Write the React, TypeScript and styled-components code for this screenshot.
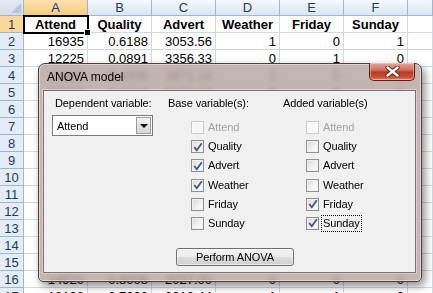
import { Fragment } from 'react';
import styled, { createGlobalStyle } from 'styled-components';

const GlobalStyle = createGlobalStyle`
    body {
        margin: 0;
        overflow: hidden;
        background: #fff;
    }
`;

const columns = ['A', 'B', 'C', 'D', 'E', 'F'];

const data: string[][] = [
    ['Attend', 'Quality', 'Advert', 'Weather', 'Friday', 'Sunday'],
    ['16935', '0.6188', '3053.56', '1', '0', '1'],
    ['12225', '0.0891', '3356.33', '0', '1', '0'],
    ['15862', '0.4305', '2871.14', '1', '0', '0'],
    ['13307', '0.2214', '3102.87', '0', '0', '1'],
    ['17244', '0.7652', '2954.02', '1', '1', '0'],
    ['11896', '0.1437', '3311.75', '0', '0', '0'],
    ['14520', '0.5519', '2765.48', '1', '0', '1'],
    ['16011', '0.6943', '3189.90', '1', '1', '0'],
    ['12874', '0.3026', '2902.66', '0', '0', '0'],
    ['15433', '0.4877', '3244.12', '1', '0', '1'],
    ['13998', '0.2760', '2811.39', '0', '1', '0'],
    ['17605', '0.8121', '3067.81', '1', '0', '0'],
    ['12450', '0.1189', '2988.25', '0', '0', '1'],
    ['16320', '0.5804', '3150.07', '1', '1', '0'],
    ['14920', '0.8008', '2027.00', '0', '0', '0'],
    ['18198', '0.7303', '3013.44', '1', '1', '0'],
];

const Page = styled.div`
    position: relative;
    width: 433px;
    height: 293px;
    overflow: hidden;
`;

const Sheet = styled.div`
    display: grid;
    grid-template-columns: 24px repeat(6, 64px) 25px;
    grid-template-rows: 16px;
    grid-auto-rows: 17px;
    font-family: "Liberation Sans", Arial, sans-serif;
`;

const Corner = styled.div`
    position: relative;
    box-sizing: border-box;
    background: linear-gradient(#e4ebf5, #d3ddeb);
    border-right: 1px solid #9eb6ce;
    border-bottom: 1px solid #9eb6ce;

    &::after {
        content: '';
        position: absolute;
        right: 2px;
        bottom: 2px;
        border-left: 10px solid transparent;
        border-bottom: 10px solid #b4c6dc;
    }
`;

const ColHeader = styled.div<{ $selected?: boolean }>`
    box-sizing: border-box;
    display: flex;
    align-items: center;
    justify-content: center;
    font-size: 13px;
    color: #1f3a5c;
    background: ${p => p.$selected
        ? 'linear-gradient(#fbe0ae, #f7cd7f)'
        : 'linear-gradient(#f5f8fc, #dce5f1)'};
    border-right: 1px solid #9eb6ce;
    border-bottom: 1px solid ${p => (p.$selected ? '#f2b254' : '#9eb6ce')};
`;

const RowHeader = styled.div<{ $selected?: boolean }>`
    box-sizing: border-box;
    display: flex;
    align-items: center;
    justify-content: center;
    font-size: 13px;
    color: #1f3a5c;
    background: ${p => (p.$selected ? '#f9d898' : '#e4ecf7')};
    border-right: 1px solid ${p => (p.$selected ? '#f2b254' : '#9eb6ce')};
    border-bottom: 1px solid #9eb6ce;
`;

const Cell = styled.div<{ $bold?: boolean; $active?: boolean }>`
    position: relative;
    box-sizing: border-box;
    display: flex;
    align-items: center;
    justify-content: ${p => (p.$bold ? 'center' : 'flex-end')};
    padding: 0 3px;
    font-size: 13px;
    font-weight: ${p => (p.$bold ? 700 : 400)};
    color: #000;
    white-space: nowrap;
    border-right: 1px solid #d0d7e5;
    border-bottom: 1px solid #d0d7e5;
    outline: ${p => (p.$active ? '2px solid #000' : 'none')};
    outline-offset: -1px;
`;

const FillHandle = styled.span`
    position: absolute;
    right: -4px;
    bottom: -4px;
    width: 5px;
    height: 5px;
    background: #000;
    border: 1px solid #fff;
    z-index: 1;
`;

const Dialog = styled.div`
    position: absolute;
    left: 38px;
    top: 63px;
    width: 384px;
    height: 219px;
    box-sizing: border-box;
    display: flex;
    flex-direction: column;
    border: 1px solid #4e3f3c;
    border-radius: 7px 7px 5px 5px;
    background: rgba(184, 165, 160, 0.82);
    backdrop-filter: blur(2.5px);
    box-shadow: inset 0 0 0 1px rgba(255, 255, 255, 0.45), 3px 4px 9px rgba(0, 0, 0, 0.45);
    font-family: "Liberation Sans", Tahoma, sans-serif;
`;

const TitleBar = styled.div`
    position: relative;
    height: 26px;
    flex: none;
    display: flex;
    align-items: center;
    padding-left: 8px;
    font-size: 12px;
    color: #000;
`;

const CloseButton = styled.div`
    position: absolute;
    top: -1px;
    right: 6px;
    width: 46px;
    height: 18px;
    box-sizing: border-box;
    display: flex;
    align-items: center;
    justify-content: center;
    border: 1px solid #5a2118;
    border-top: none;
    border-radius: 0 0 5px 5px;
    background: linear-gradient(#e6a79a 0%, #d2705d 40%, #b83a24 55%, #c9553c 85%, #e08a6c 100%);
    box-shadow: inset 0 0 0 1px rgba(255, 220, 210, 0.45);
`;

const Panel = styled.div`
    flex: 1;
    margin: 0 5px 8px 4px;
    border: 1px solid #7b7371;
    background: #f0f0f0;
    box-shadow: 0 0 0 1px rgba(255, 255, 255, 0.35);
    font-size: 11px;
    letter-spacing: -0.1px;
    color: #000;
`;

const Columns = styled.div`
    display: grid;
    grid-template-columns: 116px 115px 1fr;
    padding: 6px 0 0 8px;
`;

const Group = styled.div`
    display: flex;
    flex-direction: column;
`;

const Heading = styled.div<{ $indent?: number }>`
    line-height: 13px;
    height: 13px;
    padding-left: ${p => p.$indent ?? 0}px;
    white-space: nowrap;
`;

const Combo = styled.div`
    margin-top: 5px;
    width: 101px;
    height: 21px;
    box-sizing: border-box;
    display: flex;
    border: 1px solid #7a7a7a;
    background: #fff;
`;

const ComboText = styled.div`
    flex: 1;
    display: flex;
    align-items: center;
    padding-left: 4px;
`;

const ComboArrow = styled.div`
    width: 15px;
    margin: 1px;
    box-sizing: border-box;
    display: flex;
    align-items: center;
    justify-content: center;
    border: 1px solid #9c9c9c;
    background: linear-gradient(#f3f3f3, #d6d6d6);

    &::after {
        content: '';
        border-left: 4px solid transparent;
        border-right: 4px solid transparent;
        border-top: 4px solid #000;
    }
`;

const CheckList = styled.div`
    display: flex;
    flex-direction: column;
    gap: 6.2px;
    margin-top: 11px;
    padding-left: 23px;
`;

const Item = styled.div<{ $disabled?: boolean }>`
    display: flex;
    align-items: center;
    gap: 4px;
    height: 13px;
    color: ${p => (p.$disabled ? '#a3a3a3' : '#000')};
`;

const Box = styled.div<{ $disabled?: boolean }>`
    width: 13px;
    height: 13px;
    box-sizing: border-box;
    flex: none;
    display: flex;
    align-items: center;
    justify-content: center;
    border: 1px solid ${p => (p.$disabled ? '#c9c9c9' : '#8e8f8f')};
    background: ${p => p.$disabled
        ? '#f6f6f6'
        : 'linear-gradient(135deg, #d6d6d6, #f4f4f4 60%, #fdfdfd)'};
    box-shadow: inset 0 0 0 1px ${p => (p.$disabled ? '#fbfbfb' : '#f0f0f0')};
`;

const ItemLabel = styled.span<{ $focused?: boolean }>`
    line-height: 13px;
    padding: 1px 1px;
    margin-left: -1px;
    outline: ${p => (p.$focused ? '1px dotted #000' : 'none')};
`;

const ButtonRow = styled.div`
    padding: 18px 0 0 132px;
`;

const Button = styled.div`
    width: 118px;
    height: 18px;
    box-sizing: border-box;
    display: flex;
    align-items: center;
    justify-content: center;
    border: 1px solid #707070;
    border-radius: 3px;
    background: linear-gradient(#f2f2f2 0%, #ebebeb 50%, #dddddd 51%, #cfcfcf 100%);
    box-shadow: inset 0 0 0 1px rgba(255, 255, 255, 0.6);
`;

const Check = () => (
    <svg width="10" height="10" viewBox="0 0 10 10">
        <path d="M1.3 5 L3.8 8.3 L8.8 1.2" fill="none" stroke="#3f5396" strokeWidth="1.8" />
    </svg>
);

const CloseGlyph = () => (
    <svg width="15" height="11" viewBox="0 0 15 11">
        <path d="M2.5 1.5 L12.5 9.5 M12.5 1.5 L2.5 9.5" stroke="#4a2a24" strokeWidth="4.2" strokeLinecap="round" />
        <path d="M2.5 1.5 L12.5 9.5 M12.5 1.5 L2.5 9.5" stroke="#fff" strokeWidth="2.4" strokeLinecap="round" />
    </svg>
);

type Var = { name: string; checked?: boolean; disabled?: boolean; focused?: boolean };

const baseVars: Var[] = [
    { name: 'Attend', disabled: true },
    { name: 'Quality', checked: true },
    { name: 'Advert', checked: true },
    { name: 'Weather', checked: true },
    { name: 'Friday' },
    { name: 'Sunday' },
];

const addedVars: Var[] = [
    { name: 'Attend', disabled: true },
    { name: 'Quality' },
    { name: 'Advert' },
    { name: 'Weather' },
    { name: 'Friday', checked: true },
    { name: 'Sunday', checked: true, focused: true },
];

const VarList = ({ vars }: { vars: Var[] }) => (
    <CheckList>
        {vars.map(v => (
            <Item key={v.name} $disabled={v.disabled}>
                <Box $disabled={v.disabled}>{v.checked && <Check />}</Box>
                <ItemLabel $focused={v.focused}>{v.name}</ItemLabel>
            </Item>
        ))}
    </CheckList>
);

const App = () => {
    return (
        <Page>
            <GlobalStyle />
            <Sheet>
                <Corner />
                {columns.map(c => (
                    <ColHeader key={c} $selected={c === 'A'}>{c}</ColHeader>
                ))}
                <ColHeader />
                {data.map((row, r) => (
                    <Fragment key={r}>
                        <RowHeader $selected={r === 0}>{r + 1}</RowHeader>
                        {row.map((v, c) => (
                            <Cell key={c} $bold={r === 0} $active={r === 0 && c === 0}>
                                {v}
                                {r === 0 && c === 0 && <FillHandle />}
                            </Cell>
                        ))}
                        <Cell />
                    </Fragment>
                ))}
            </Sheet>

            <Dialog>
                <TitleBar>
                    ANOVA model
                    <CloseButton><CloseGlyph /></CloseButton>
                </TitleBar>
                <Panel>
                    <Columns>
                        <Group>
                            <Heading $indent={3}>Dependent variable:</Heading>
                            <Combo>
                                <ComboText>Attend</ComboText>
                                <ComboArrow />
                            </Combo>
                        </Group>
                        <Group>
                            <Heading>Base variable(s):</Heading>
                            <VarList vars={baseVars} />
                        </Group>
                        <Group>
                            <Heading>Added variable(s)</Heading>
                            <VarList vars={addedVars} />
                        </Group>
                    </Columns>
                    <ButtonRow>
                        <Button>Perform ANOVA</Button>
                    </ButtonRow>
                </Panel>
            </Dialog>
        </Page>
    );
};

export default App;
